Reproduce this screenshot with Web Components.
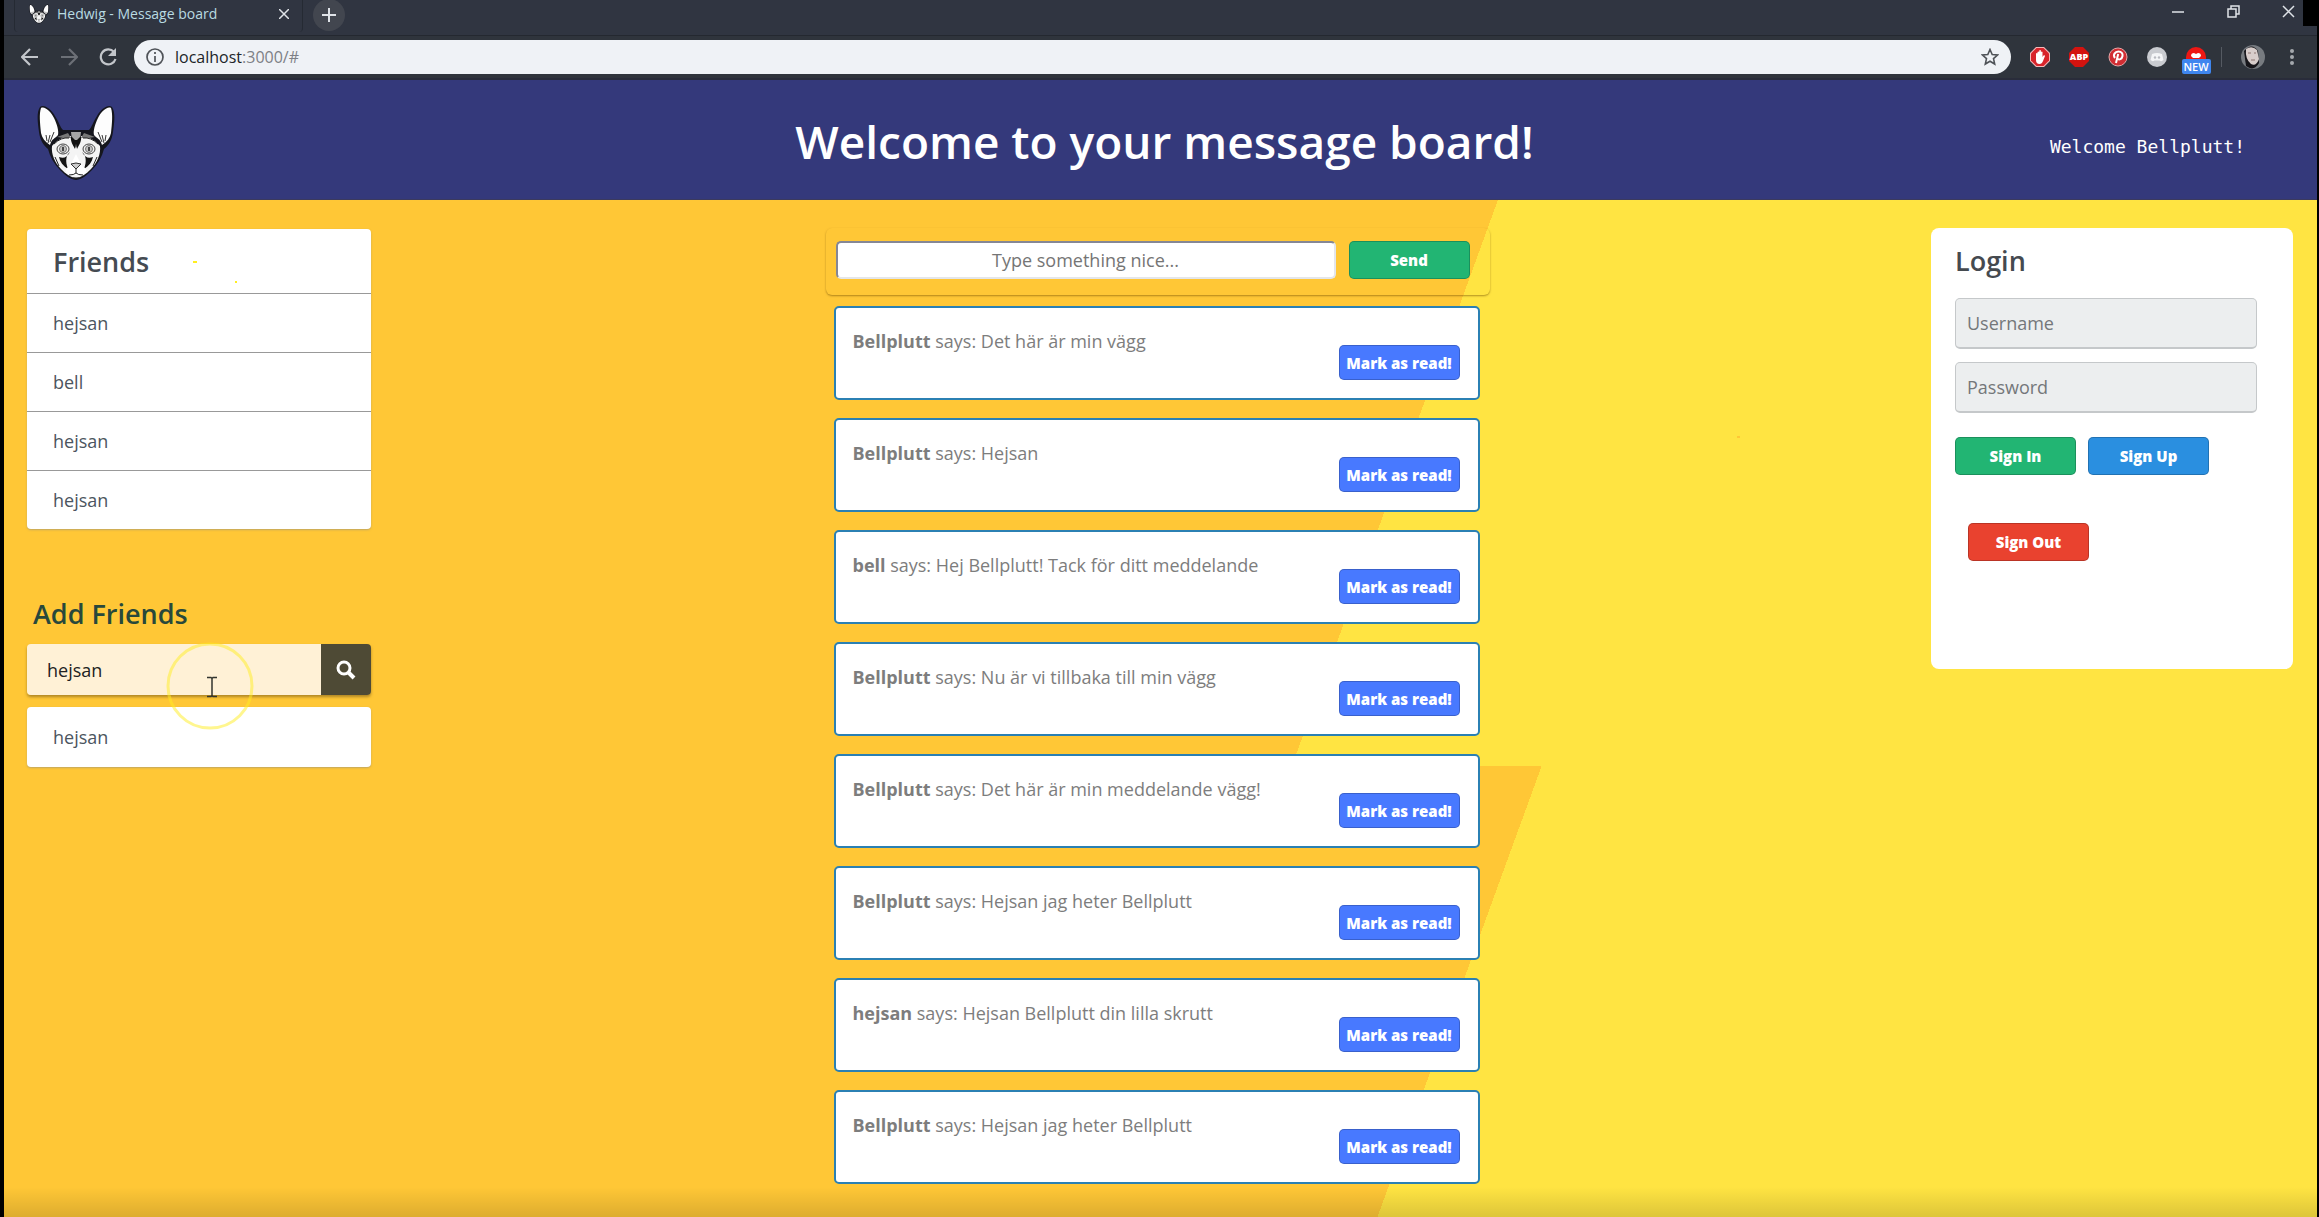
<!DOCTYPE html>
<html lang="sv">
<head>
<meta charset="utf-8">
<title>Hedwig - Message board</title>
<style>
html,body{margin:0;height:100%}
body{background:#000;font-family:"Open Sans","Noto Sans",sans-serif;font-size:18px;line-height:24px;color:#4a4f55}
</style>
</head>
<body>
<hedwig-window></hedwig-window>
<script>
const define=(name,html,init)=>customElements.define(name,class extends HTMLElement{
  constructor(){super();this.attachShadow({mode:'open'}).innerHTML='<style>*{box-sizing:border-box}h1,h2,p,ul,form{margin:0;padding:0}button,input{font:inherit}</style>'+html;}
  connectedCallback(){if(init)init.call(this,this.shadowRoot);}
});

/* cat mascot, used in the tab and in the header */
define('cat-logo',`<style>:host{display:block;flex:none}svg{display:block;width:100%;height:100%}</style>
<svg viewBox="0 0 78 76" aria-hidden="true">
<path d="M3 2C7-1 14 4 18 11c4 6 5 11 8 14l26 0c3-3 4-8 8-14 4-7 11-12 15-9 4 6 2 17 1 25-1 8-4 13-9 17-2 8-6 15-12 21-5 5-9 9-16 10-7-1-11-5-16-10-6-6-10-13-12-21-5-4-8-9-9-17C1 19-1 8 3 2z" fill="#15161d"/>
<path d="M4 3c4-2 10 4 13 10 3 6 5 13 4 17-3 4-6 3-8 10-5-3-8-7-9-12C3 18 2 9 4 3z" fill="#fdfdfd"/>
<path d="M74 3c-4-2-10 4-13 10-3 6-5 13-4 17 3 4 6 3 8 10 5-3 8-7 9-12 1-9 2-19 0-25z" fill="#fdfdfd"/>
<path d="M9 30l1 6M13 30l-2 8M17 27l-4 10M69 30l-1 6M65 30l2 8M61 27l4 10" stroke="#333"/>
<path d="M15 41c4-5 11-10 19-10 2 3 4 7 5 12 1-5 3-9 5-12 8 0 15 5 19 10 1 8-3 17-9 23-5 5-9 8-15 9-6-1-10-4-15-9-6-6-10-15-9-23z" fill="#f4f4f4"/>
<path d="M34 27l10 0-1 8-4 7-4-7z" fill="#a5a5a5"/>
<path d="M20 32l11-4 3 5-7 0zM58 32l-11-4-3 5 7 0z" fill="#777"/>
<path d="M34 31c-1 5 2 9 4 13l1-5 1 5c2-4 5-8 4-13l-4 4h-2z" fill="#111"/>
<path d="M33 47c-4 3-5 9-2 17-5-3-8-7-9-12 5 2 8 0 11-5zM45 47c4 3 5 9 2 17 5-3 8-7 9-12-5 2-8 0-11-5z" fill="#151515"/>
<ellipse cx="26" cy="44" rx="6" ry="5" fill="#f1f1f1" stroke="#444" stroke-width="1"/>
<ellipse cx="52" cy="44" rx="6" ry="5" fill="#f1f1f1" stroke="#444" stroke-width="1"/>
<circle cx="26" cy="44" r="3.500" fill="#c4c4c4" stroke="#777"/><circle cx="52" cy="44" r="3.500" fill="#c4c4c4" stroke="#777"/>
<path d="M26 42v4M52 42v4" stroke="#111" stroke-width="1.400"/>
<path d="M39 49l-6 12c-5 2-6 7-1 9h14c5-2 4-7-1-9z" fill="#fff"/>
<path d="M34 59q5-2 10 0l-5 5z" fill="#ccc" stroke="#333" stroke-width="1"/>
<path d="M39 64v4M32 70q5 0 7-2 2 2 7 2M36 73h6M17 39q7-7 15-6M61 39q-7-7-15-6M18 52l4 9M60 52l-4 9" stroke="#222" fill="none"/>
</svg>`);

define('browser-tabs',`<style>
:host{display:flex;height:35px;background:#303541;color:#b9dbe2;font-size:14px;line-height:20px;padding-left:10px;align-items:flex-start}
.tab{display:flex;align-items:center;width:289px;height:32px;padding:0 13px 4px 14px;border:1px solid #252a33;border-width:0 1px;border-radius:0 0 4px 4px}
cat-logo{width:20px;height:20px;margin-right:8px}
.tab span{flex:1;white-space:nowrap}
button{border:0;background:none;padding:0;display:grid;place-items:center;color:#dfe3e8}
.add{width:32px;height:32px;border-radius:50%;background:#42464f;margin-left:10px;margin-top:-1px}
.win{margin-left:auto;display:flex;gap:25px}.win button{width:30px;height:23px}
.edge{width:14px;height:26px;background:#000}
svg{fill:none;stroke:currentColor;stroke-width:1.500;display:block}
.add svg{stroke-width:2}
</style>
<div class="tab"><cat-logo></cat-logo><span>Hedwig - Message board</span><button aria-label="Close tab"><svg width="10" height="10"><path d="M0 0L10 10M10 0L0 10"/></svg></button></div>
<button class="add" aria-label="New tab"><svg width="14" height="14"><path d="M7 0v14M0 7h14"/></svg></button>
<div class="win"><button aria-label="Minimize"><svg width="12" height="12"><path d="M0 6h12"/></svg></button>
<button aria-label="Restore"><svg width="13" height="13"><path d="M1 4h8v8h-8zM4 4V1h8v8H9"/></svg></button>
<button aria-label="Close"><svg width="13" height="13"><path d="M1 1l11 11M12 1L1 12"/></svg></button></div><div class="edge"></div>`);

define('browser-toolbar',`<style>
:host{display:flex;align-items:center;height:45px;background:#2f343c;border-top:1px solid #242830;border-bottom:2px solid #292c3a;padding:0 17px 0 7px}
button{border:0;background:none;padding:0;display:grid;place-items:center;width:38px;height:36px;color:#c3c6cb}
button.dim{color:#6c7077}
svg{display:block}
.nav{display:flex;width:123px;gap:1px}
.url{flex:1;display:flex;align-items:center;height:34px;border-radius:17px;background:#eff2f6;padding:0 12px;margin-right:19px}
.addr{flex:1;margin-left:11px;font-size:16px;line-height:22px;color:#7d8085}.addr b{font-weight:400;color:#202428}
.ext{display:flex;gap:19px;align-items:center}.sep{width:1px;height:20px;background:#555a62;margin-left:-4px}
.ext svg{overflow:visible}
.ext text{font-family:"Open Sans",sans-serif}
</style>
<div class="nav"><button aria-label="Back"><svg width="18" height="18" fill="none" stroke="currentColor" stroke-width="2.200"><path d="M17 9H2M9 1L1 9l8 8"/></svg></button>
<button class="dim" aria-label="Forward"><svg width="18" height="18" fill="none" stroke="currentColor" stroke-width="2.200"><path d="M1 9h15M9 1l8 8-8 8"/></svg></button>
<button aria-label="Reload"><svg width="18" height="18" fill="none" stroke="currentColor" stroke-width="2.200"><path d="M15 4a7.500 7.500 0 1 0 1.500 7"/><path d="M17 0v8H9z" fill="currentColor" stroke="none"/></svg></button></div>
<div class="url"><svg width="18" height="18" fill="none" stroke="#4f5358" stroke-width="1.700"><circle cx="9" cy="9" r="8"/><path d="M9 8v6M9 4v2"/></svg>
<div class="addr"><b>localhost</b>:3000/#</div>
<svg width="18" height="18" viewBox="0 0 18 18" fill="none" stroke="#4f5358" stroke-width="1.600"><path d="M9 1.500l2.200 5 5.300.5-4 3.600 1.200 5.400L9 13.200 4.300 16l1.200-5.400-4-3.600 5.300-.5z"/></svg></div>
<div class="ext">
<svg width="20" height="20"><path d="M6 0h8l6 6v8l-6 6H6l-6-6V6z" fill="#f4b9b9"/><path d="M6.500 1h7L19 6.500v7L13.500 19h-7L1 13.500v-7z" fill="#d8242b"/><path d="M6 11V6.500q1-1 1.500 0V5q1-1 1.700 0V3.500q1-1 1.700 0V5q1-1 1.600 0v5l1-1.500q1.500-.5 1.500.5l-2 5q-1 3-3.500 3-3.500 0-3.500-4z" fill="#fff"/></svg>
<svg width="20" height="20"><path d="M6 0h8l6 6v8l-6 6H6l-6-6V6z" fill="#d3130f"/><text x="10" y="13" text-anchor="middle" font-size="9" font-weight="800" fill="#fff">ABP</text></svg>
<svg width="20" height="20"><circle cx="10" cy="10" r="9" fill="#d22d33" stroke="#e6a7a8"/><path d="M8 16l2.200-9M7 11C4.500 8 7 4.500 10.500 4.500c3 0 4.500 2 4 4.500-.5 3-3.500 4.500-5 2.500" fill="none" stroke="#fff" stroke-width="2"/></svg>
<svg width="20" height="20"><circle cx="10" cy="10" r="10" fill="#c9cbd0"/><path d="M5 7q5-2 10 0l1.500 6q-2 2-4 .5h-5q-2 1.500-4-.5z" fill="#f4f5f7"/><circle cx="8" cy="10.500" r="1.200" fill="#b8bac0"/><circle cx="12" cy="10.500" r="1.200" fill="#b8bac0"/></svg>
<svg width="20" height="20"><path d="M0 10a10 10 0 0 1 20 0v3H0z" fill="#ee1714"/><path d="M5 9q0-3 3-3l2 1 2-1q3 0 3 3l-2 2H7z" fill="#fff"/><rect x="-4" y="12" width="29" height="15" rx="2" fill="#3f86ef"/><text x="10" y="24" text-anchor="middle" font-size="11" font-weight="600" fill="#fff">NEW</text></svg>
<span class="sep"></span>
<svg width="24" height="24"><circle cx="12" cy="12" r="12" fill="#777b80"/><path d="M3 6q8-9 14 0l1 12q-5 9-13 3z" fill="#16151a"/><path d="M5 4q6-4 11 1l2 9q-3 8-8 5-6-5-5-15z" fill="#d8cdcb"/><path d="M7 8h3M13 8h2M10 15h4" stroke="#8d7471"/></svg>
<svg width="16" height="20" fill="#a4a8ad"><circle cx="8" cy="4" r="2"/><circle cx="8" cy="10" r="2"/><circle cx="8" cy="16" r="2"/></svg>
</div>`);

define('board-header',`<style>
:host{display:grid;grid-template-columns:1fr auto 1fr;align-items:center;height:120px;background:#34397b;border-bottom:1px solid #3b3a5e;padding:0 24px 0 32px;color:#fff}
cat-logo{width:78px;height:76px;margin:6px 0 0 1px}
h1{font-size:46px;line-height:56px;font-weight:600;padding-top:2px}
p{justify-self:end;font-family:"DejaVu Sans Mono",monospace;font-size:18px;line-height:24px;padding:14px 48px 0 0}
</style><cat-logo></cat-logo><h1>Welcome to your message board!</h1><p>Welcome Bellplutt!</p>`);

define('friend-list',`<style>
:host{display:block;background:#fff;border-radius:4px;box-shadow:0 1px 2px #8888}
h2{font-size:27px;line-height:32px;font-weight:600;padding:17px 26px 15px;color:#454b52}
ul{list-style:none}::slotted(li){display:block;padding:17px 26px;border-top:1px solid #999;color:#4c5560}
:host([plain]) h2{display:none}:host([plain]) ::slotted(li){border-top:0;padding:18px 26px}
</style><h2>Friends</h2><ul><slot></slot></ul>`);

define('friend-search',`<style>
:host{display:block}
h2{font-size:27px;line-height:32px;font-weight:600;color:#28483b;padding-left:6px;margin-bottom:14px}
form{display:flex;height:51px;border-radius:4px;overflow:hidden;box-shadow:0 2px 3px #7a5c1a99}
input{flex:1;min-width:0;border:0;outline:0;background:#fff1d6;padding:0 20px;color:#222}
button{width:50px;border:0;padding:0;background:#4e4a35;display:grid;place-items:center}
</style><h2>Add Friends</h2><form><input value="hejsan" aria-label="Add Friends"><button type="button" aria-label="Search"><svg width="20" height="20" fill="none" stroke="#fff"><circle cx="8" cy="8" r="6" stroke-width="3"/><path d="M12.500 12.500l5.500 5.500" stroke-width="4"/></svg></button></form>`);

define('action-button',`<style>
:host{display:block;width:121px;height:38px}
button{width:100%;height:100%;border:1px solid #0003;border-radius:5px;background:var(--fill,#22b573);color:#fff;font-size:15px;line-height:20px;font-weight:800;padding:0;white-space:nowrap}
</style><button type="button"><slot></slot></button>`);

define('message-form',`<style>
:host{display:block}
form{display:flex;gap:13px;padding:12px 19px 15px 9px;border-radius:6px;border:1px solid transparent;box-shadow:0 1px 2px #6b4a0088}
input{flex:1;min-width:0;height:38px;border:2px solid;border-color:#858795 #e4e6ea #e4e6ea #858795;border-radius:5px;background:#fff;text-align:center;padding:0 8px}
input::placeholder{color:#757575;opacity:1}
</style><form><input aria-label="Message" placeholder="Type something nice..."><action-button>Send</action-button></form>`);

define('message-card',`<style>
:host{display:flex;height:94px;background:#fff;border:2px solid #2b80b3;border-radius:5px;padding:21px 18px 0 17px;color:#7d7d7d;justify-content:space-between}
action-button{--fill:#4879ff;height:35px;margin-top:16px}
b{font-weight:700}
</style><p><b><slot name="who"></slot></b> says: <slot></slot></p><action-button>Mark as read!</action-button>`);

define('login-panel',`<style>
:host{display:block;width:362px;min-height:441px;background:#fff;border-radius:8px;padding:17px 36px 24px 24px}
h2{font-size:27px;line-height:32px;font-weight:600;color:#454a50;margin-bottom:21px}
input{display:block;width:100%;height:51px;border:1px solid #c5c8ca;border-bottom-width:2px;border-radius:5px;background:#eceeef;padding:0 11px;margin-bottom:13px}
input::placeholder{color:#74777a;opacity:1}
.row{display:flex;gap:12px;margin-top:24px}.out{margin:48px 0 0 13px;--fill:#e9422f}.up{--fill:#2a8fe0}
</style><h2>Login</h2><form><input aria-label="Username" placeholder="Username"><input aria-label="Password" type="password" placeholder="Password">
<div class="row"><action-button>Sign In</action-button><action-button class="up">Sign Up</action-button></div><action-button class="out">Sign Out</action-button></form>`);

/* highlighted text cursor over the page */
define('cursor-trail',`<style>:host{position:absolute;inset:0;pointer-events:none;overflow:hidden}svg{display:block;width:100%;height:100%}</style>
<svg aria-hidden="true"><circle cx="210" cy="686" r="42" fill="none" stroke="#ffee20" stroke-opacity=".5" stroke-width="3"/><path d="M207 677.500h4l1 1 1-1h4M212 678v18M207 696.500h4l1-1 1 1h4" fill="none" stroke="#33352f" stroke-width="1.500"/><path d="M193 262h4M235 282h2" stroke="#ffee20" stroke-width="2"/><path d="M1737 437h3" stroke="#ffc736" stroke-width="2"/></svg>`);

define('hedwig-window',`<style>
:host{display:flex;flex-direction:column;min-height:100vh;padding:0 2px 0 4px;position:relative;overflow:hidden}
main{flex:1;display:grid;grid-template-columns:1fr 664px 1fr;align-items:start;padding:28px 24px 30px 18px;
background:linear-gradient(#0000 calc(100% - 30px),#0002),linear-gradient(110deg,#ffc736 60%,#ffe442 60%) 0 -120px/100% 686px}
.left{width:353px;padding:1px 4px 0 5px}
friend-search{margin:69px 0 12px}
.list{display:flex;flex-direction:column;gap:18px;padding:11px 10px 0 8px}
login-panel{justify-self:end}
</style>
<browser-tabs></browser-tabs><browser-toolbar></browser-toolbar><board-header></board-header>
<main><section class="left"><friend-list><li>hejsan</li><li>bell</li><li>hejsan</li><li>hejsan</li></friend-list>
<friend-search></friend-search><friend-list plain><li>hejsan</li></friend-list></section>
<section><message-form></message-form><div class="list"></div></section>
<login-panel></login-panel></main><cursor-trail></cursor-trail>`,function(root){
  const list=root.querySelector('.list');
  for(const [who,text] of [['Bellplutt','Det här är min vägg'],['Bellplutt','Hejsan'],['bell','Hej Bellplutt! Tack för ditt meddelande'],['Bellplutt','Nu är vi tillbaka till min vägg'],['Bellplutt','Det här är min meddelande vägg!'],['Bellplutt','Hejsan jag heter Bellplutt'],['hejsan','Hejsan Bellplutt din lilla skrutt'],['Bellplutt','Hejsan jag heter Bellplutt']]){
    const card=document.createElement('message-card'),name=document.createElement('span');
    name.slot='who';name.textContent=who;card.append(name,text);list.append(card);
  }
});
</script>
</body>
</html>
